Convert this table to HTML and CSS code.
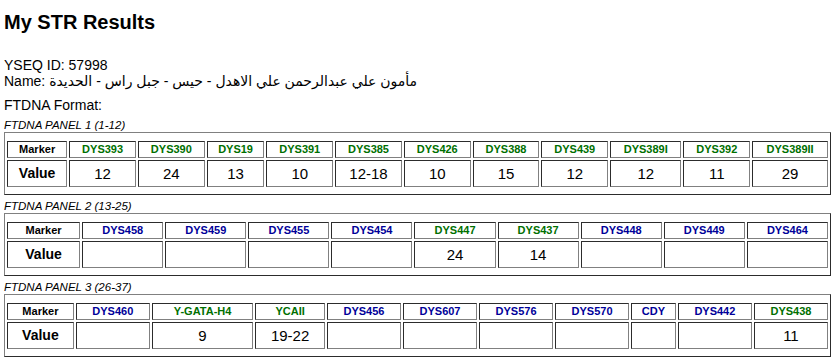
FILE: index.html
```html
<!DOCTYPE html>
<html>
<head>
<meta charset="utf-8">
<title>My STR Results</title>
<link rel="stylesheet" href="styles.css">
</head>
<body>
<div class="page">
  <h1 class="title">My STR Results</h1>
  <div class="info">
    <div>YSEQ ID: 57998</div>
    <div>Name: مأمون علي عبدالرحمن علي الاهدل - حيس - جبل راس - الحديدة</div>
  </div>
  <div class="format">FTDNA Format:</div>

  <section class="panel">
    <div class="panel-label">FTDNA PANEL 1 (1-12)</div>
    <table class="str">
      <tr>
        <th class="row-head">Marker</th>
        <th class="g">DYS393</th><th class="g">DYS390</th><th class="g">DYS19</th><th class="g">DYS391</th>
        <th class="g">DYS385</th><th class="g">DYS426</th><th class="g">DYS388</th><th class="g">DYS439</th>
        <th class="g">DYS389I</th><th class="g">DYS392</th><th class="g">DYS389II</th>
      </tr>
      <tr>
        <td class="row-head val">Value</td>
        <td>12</td><td>24</td><td>13</td><td>10</td><td>12-18</td><td>10</td><td>15</td><td>12</td><td>12</td><td>11</td><td>29</td>
      </tr>
    </table>
  </section>

  <section class="panel">
    <div class="panel-label">FTDNA PANEL 2 (13-25)</div>
    <table class="str">
      <tr>
        <th class="row-head">Marker</th>
        <th class="b">DYS458</th><th class="b">DYS459</th><th class="b">DYS455</th><th class="b">DYS454</th>
        <th class="g">DYS447</th><th class="g">DYS437</th><th class="b">DYS448</th><th class="b">DYS449</th><th class="b">DYS464</th>
      </tr>
      <tr>
        <td class="row-head val">Value</td>
        <td></td><td></td><td></td><td></td><td>24</td><td>14</td><td></td><td></td><td></td>
      </tr>
    </table>
  </section>

  <section class="panel">
    <div class="panel-label">FTDNA PANEL 3 (26-37)</div>
    <table class="str">
      <tr>
        <th class="row-head">Marker</th>
        <th class="b">DYS460</th><th class="g">Y-GATA-H4</th><th class="g">YCAII</th><th class="b">DYS456</th>
        <th class="b">DYS607</th><th class="b">DYS576</th><th class="b">DYS570</th><th class="b">CDY</th>
        <th class="b">DYS442</th><th class="g">DYS438</th>
      </tr>
      <tr>
        <td class="row-head val">Value</td>
        <td></td><td>9</td><td>19-22</td><td></td><td></td><td></td><td></td><td></td><td></td><td>11</td>
      </tr>
    </table>
  </section>
</div>
</body>
</html>
```
FILE: styles.css
```css
html, body {
  margin: 0;
  padding: 0;
  background: #fff;
}
body {
  font-family: "Liberation Sans", Arial, "DejaVu Sans", sans-serif;
  color: #000;
}
.page {
  padding: 0 9px 0 4px;
}
.title {
  font-size: 20px;
  line-height: 23px;
  font-weight: bold;
  margin: 11px 0 23px;
}
.info {
  font-size: 14px;
  line-height: 16px;
}
.format {
  font-size: 14px;
  line-height: 16px;
  margin: 8px 0 6px;
}
.panel {
  margin-bottom: 5px;
}
.panel-label {
  font-size: 11.5px;
  line-height: 13px;
  font-style: italic;
}
.str {
  width: 100%;
  border: 1px outset #808080;
  border-spacing: 2px;
  padding: 6px 0 5px;
  box-sizing: border-box;
}
.str th,
.str td {
  border: 1px inset #808080;
  text-align: center;
  padding: 1px;
}
.str th {
  font-size: 11px;
  line-height: 13px;
  font-weight: bold;
}
.str td {
  font-size: 15px;
  line-height: 23px;
}
.str .val {
  font-size: 14px;
  font-weight: bold;
}
.g { color: #007000; }
.b { color: #000099; }
.str th.row-head { color: #000; }
```
